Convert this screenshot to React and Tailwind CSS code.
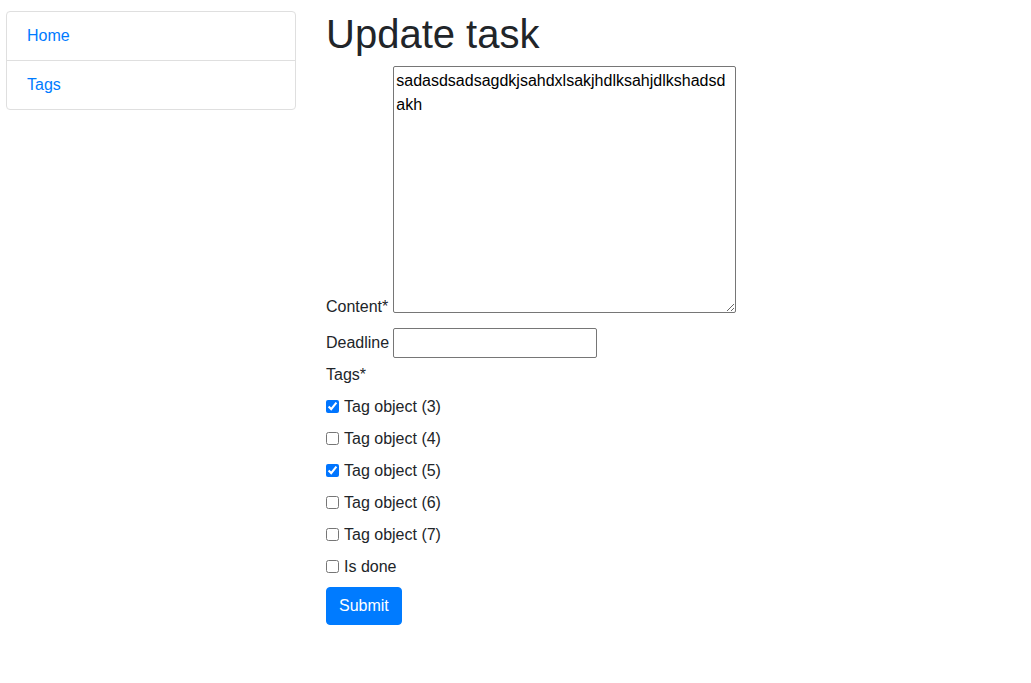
import { useState } from "react";

const tags = [
  { id: 3, checked: true },
  { id: 4, checked: false },
  { id: 5, checked: true },
  { id: 6, checked: false },
  { id: 7, checked: false },
];

const Sidebar = () => (
  <div className="w-[290px] shrink-0 self-start rounded-[4px] border border-[#dfdfdf] flex flex-col">
    <a href="#" className="px-5 py-3 leading-6 text-[#007bff] border-b border-[#dfdfdf]">
      Home
    </a>
    <a href="#" className="px-5 py-3 leading-6 text-[#007bff]">
      Tags
    </a>
  </div>
);

const CheckRow = ({ label, defaultChecked }) => (
  <label className="flex items-center h-6 leading-6">
    <input
      type="checkbox"
      defaultChecked={defaultChecked}
      className="m-0 -mt-[2px] mr-[5px] w-[13px] h-[13px] accent-[#0075ff]"
    />
    {label}
  </label>
);

export default function App() {
  const [content, setContent] = useState(
    "sadasdsadsagdkjsahdxlsakjhdlksahjdlkshadsdakh"
  );

  return (
    <div
      className="min-h-screen bg-white text-[16px] text-[#212529] flex gap-[30px] pl-[6px] pt-[11px]"
      style={{ fontFamily: '"Liberation Sans", Arial, sans-serif' }}
    >
      <Sidebar />
      <div className="flex flex-col items-start">
        <h1 className="text-[40px] leading-[48px] h-[48px] mb-2 -mt-px">Update task</h1>
        <div className="flex items-end gap-[5px]">
          <label className="leading-[12px]">Content*</label>
          <textarea
            value={content}
            onChange={(e) => setContent(e.target.value)}
            className="w-[343px] h-[247px] border border-[#767676] rounded-[2px] pl-[2px] pr-[5px] py-[2px] leading-6 text-[16px] text-black outline-none resize-y break-all"
          />
        </div>
        <div className="flex items-center gap-[4px] mt-[15px]">
          <label className="leading-6">Deadline</label>
          <input
            type="text"
            className="w-[204px] h-[30px] border border-[#767676] rounded-[2px] px-1 outline-none"
          />
        </div>
        <div className="flex flex-col gap-2 mt-[5px]">
          <span className="leading-6">Tags*</span>
          {tags.map((t) => (
            <CheckRow key={t.id} label={`Tag object (${t.id})`} defaultChecked={t.checked} />
          ))}
          <CheckRow label="Is done" defaultChecked={false} />
        </div>
        <button className="mt-2 h-[38px] px-3 rounded-[4px] border border-[#007bff] bg-[#007bff] text-white leading-6">
          Submit
        </button>
      </div>
    </div>
  );
}
